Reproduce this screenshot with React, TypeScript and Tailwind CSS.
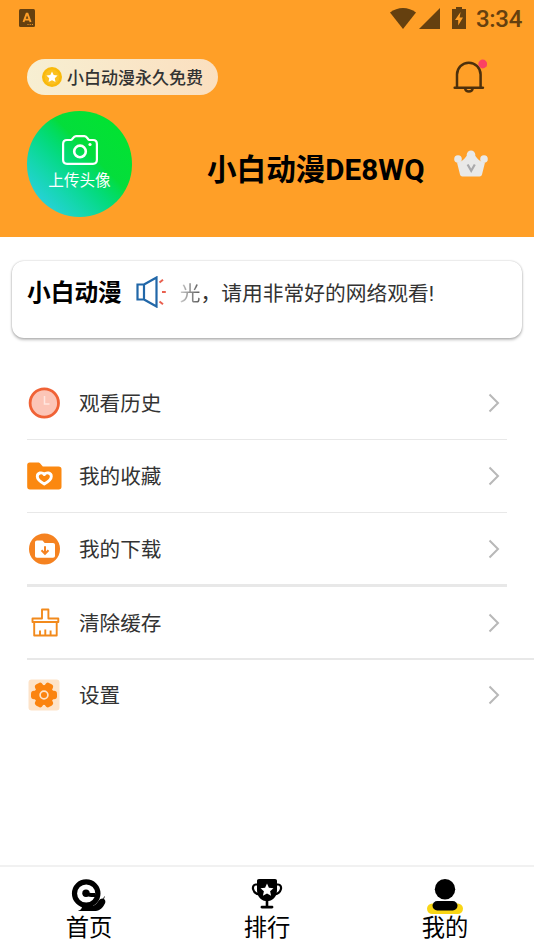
import type { ReactNode } from 'react';

type MenuItem = {
    label: string;
    icon: ReactNode;
    height: string;
    line: string;
};

function StatusBar() {
    return (
        <div className="flex h-9 items-center justify-between pr-3 pl-[19px] text-[#65400f]">
            <svg width="16" height="18" viewBox="0 0 16 18">
                <rect width="16" height="18" rx="1.5" fill="currentColor" />
                <path d="M4.5 13 7.6 4.8h.9L11.6 13M5.8 10.6h4.6" fill="none" stroke="#ff9f27" strokeWidth="1.9" />
                <path d="M8.5 15.5h1m1.2 0h1m1.2 0h1" stroke="#ff9f27" />
            </svg>
            <div className="flex items-center">
                <svg width="26" height="21" viewBox="0 0 26 21">
                    <path d="M0 4.5C7.5-1.5 18.5-1.5 26 4.5L13 21Z" fill="currentColor" />
                </svg>
                <svg className="ml-[3px]" width="21" height="21" viewBox="0 0 21 21">
                    <path d="M21 0v21H0Z" fill="currentColor" />
                </svg>
                <svg className="ml-3" width="14" height="22" viewBox="0 0 14 22">
                    <path d="M4 0h6v2h4v20H0V2h4Z" fill="currentColor" />
                    <path d="M8.6 5 3 13h3.2v5.5L11 10.5H7.6Z" fill="#ff9f27" />
                </svg>
                <span className="mt-px ml-[10px] text-[24px] leading-9 font-medium tracking-[-0.3px]">3:34</span>
            </div>
        </div>
    );
}

function BellIcon() {
    return (
        <svg width="36" height="38" viewBox="0 0 36 38" fill="none">
            <path d="M6 30V17.5a11.8 11.8 0 0 1 23.6 0V30" stroke="#4d300c" strokeWidth="2.5" />
            <path d="M3.7 30.7h28.2" stroke="#4d300c" strokeWidth="2.5" strokeLinecap="round" />
            <path d="M14 31.5c.8 4 7 4 7.8 0" stroke="#4d300c" strokeWidth="2.3" />
            <circle cx="31.700" cy="7" r="4.400" fill="#fb4163" />
        </svg>
    );
}

function CameraIcon() {
    return (
        <svg width="36" height="30" viewBox="0 0 36 30" fill="none" stroke="#fff" strokeWidth="2.2">
            <path
                d="M5 5h4c1.8 0 2-3.9 5-3.9h8.5c3 0 3 3.9 5 3.9H31c2.5 0 3.9 1.5 3.9 4v15.8c0 2.5-1.4 4-3.9 4H5c-2.5 0-3.9-1.5-3.9-4V9c0-2.5 1.4-4 3.9-4Z"
                strokeLinejoin="round"
            />
            <circle cx="18" cy="16.4" r="5.8" strokeWidth="2.6" />
            <circle cx="28" cy="9.5" r="1.6" fill="#fff" stroke="none" />
        </svg>
    );
}

function CrownIcon() {
    return (
        <svg width="34" height="28" viewBox="0 0 34 28">
            <g fill="#e9e9e8">
                <circle cx="4" cy="9" r="3.8" />
                <circle cx="17" cy="4.8" r="4.3" />
                <circle cx="30" cy="9" r="3.8" />
                <path d="M3 12.500c4-.8 7-2.200 10.200-7.500h7.600c3.200 5.300 6.200 6.700 10.200 7.500L28 24.500c-.3 1.300-1.200 2-2.500 2h-17c-1.300 0-2.200-.7-2.500-2Z" />
            </g>
            <path d="m13.600 14.500 3.600 6.300 3.600-6.300" fill="none" stroke="#a9a9ab" strokeWidth="2.2" />
        </svg>
    );
}

function SpeakerIcon() {
    return (
        <svg width="32" height="32" viewBox="0 0 32 32" fill="none">
            <path d="M1.5 8.500h6.500v15H1.500ZM8 8.500l12.500-7v29L8 23.500" stroke="#2167a8" strokeWidth="2.200" />
            <path d="m23.500 6.500 3.500-2.700M26 16h3.800M23.500 25.500l3.500 2.700" stroke="#e9604f" strokeWidth="2" />
        </svg>
    );
}

function ClockIcon() {
    return (
        <svg width="36" height="36" viewBox="0 0 36 36" fill="none">
            <circle cx="18.3" cy="18" r="14.2" fill="#fcc5b7" stroke="#f06236" strokeWidth="2.8" />
            <path d="M18.5 11v8h5" stroke="#ffe6df" strokeWidth="1.5" />
        </svg>
    );
}

function FavoriteIcon() {
    return (
        <svg width="36" height="36" viewBox="0 0 36 36" fill="none">
            <path d="M1.2 7c0-1.600.8-2.500 2.500-2.500h8.300c1 0 1.500.3 2.200 1l2.600 3H32.500c2 0 3 .9 3 2.700v17.500c0 1.800-1 2.800-2.800 2.800H4c-1.800 0-2.800-1-2.800-2.800Z" fill="#fb8810" />
            <path d="M18.300 26c-4-2.300-7-4.800-7-7.500 0-3.800 4.800-4.800 7-2 2.200-2.800 7-1.800 7 2 0 2.700-3 5.200-7 7.500Z" stroke="#fff" strokeWidth="2.900" strokeLinejoin="round" />
        </svg>
    );
}

function DownloadIcon() {
    return (
        <svg width="36" height="36" viewBox="0 0 36 36" fill="none">
            <circle cx="18.5" cy="18" r="15.5" fill="#f58220" />
            <path d="M9 11.500c0-1.300.8-2 2-2h5.500l2.200 2.500H27c1.300 0 2 .7 2 2v10.800c0 1.300-.7 2-2 2H11c-1.300 0-2-.7-2-2Z" fill="#fff" />
            <path d="M19 15.300v7m-3.500-3 3.500 3.500 3.500-3.500" stroke="#f58220" strokeWidth="2" />
        </svg>
    );
}

function BroomIcon() {
    return (
        <svg width="36" height="36" viewBox="0 0 36 36" fill="none" stroke="#f28a1c" strokeWidth="1.9" strokeLinejoin="round">
            <path d="M16 13.500V4.500h6.400v9h9.900v3.500H6.500v-3.500ZM8.200 17v13.500h22.500V17M14 30.500v-5m5.300 5v-6m5.300 6v-5" />
        </svg>
    );
}

function SettingsIcon() {
    return (
        <svg width="36" height="36" viewBox="0 0 36 36">
            <rect x="2.5" y="2.5" width="31" height="31" rx="3" fill="#fde3c9" />
            <g fill="#fb830f">
                <circle cx="18" cy="18" r="10" />
                <rect x="5" y="13.8" width="26" height="8.4" rx="3" />
                <rect x="5" y="13.8" width="26" height="8.4" rx="3" transform="rotate(60 18 18)" />
                <rect x="5" y="13.8" width="26" height="8.4" rx="3" transform="rotate(120 18 18)" />
            </g>
            <circle cx="18" cy="18" r="3.9" fill="none" stroke="#fde3c9" strokeWidth="1.7" />
        </svg>
    );
}

function SnailIcon() {
    return (
        <svg width="36" height="36" viewBox="0 0 36 36">
            <circle cx="15.200" cy="16.500" r="11.700" fill="none" stroke="#000" strokeWidth="5.200" />
            <circle cx="15" cy="16.300" r="3.700" />
            <path d="M16 14.500c2 1.700 4 1.500 8.500 1.500v4c-3.500.3-6.500 0-9.500-1.500Z" />
            <path d="M7.5 33.500c2.500-.6 3.500-2 3.500-4.500h11c4-1.500 4.500-5 7.500-7 2-1.200 4.500-.2 4.800 2 .3 2-.5 2.800-1.500 4.500-2 3.500-5 5.500-9.800 5.500H8.500c-1.500 0-1.500-.3-1-.5Z" />
            <path d="m32 23 1.500-3.500" stroke="#000" strokeWidth=".8" />
        </svg>
    );
}

function TrophyIcon() {
    return (
        <svg width="32" height="34" viewBox="0 0 32 34">
            <path d="M8 7.500H5c-5 0-4 9.500 4 10M24 7.500h3c5 0 4 9.500-4 10" fill="none" stroke="#000" strokeWidth="2.2" />
            <path d="M8 2h16c1.300 0 2 .7 2 2v9c0 6.500-4 10.500-8.700 11v4.800H21c1.800 0 2 2.600 0 2.600H11c-2 0-1.800-2.600 0-2.600h3.700V24C10 23.500 6 19.500 6 13V4c0-1.300.7-2 2-2Z" />
            <path d="m16 6.500 1.900 4.200 4.600.5-3.400 3.100 1 4.500-4.100-2.300-4.100 2.300 1-4.500-3.400-3.100 4.600-.5Z" fill="#fff" />
        </svg>
    );
}

function ProfileIcon() {
    return (
        <svg width="36" height="38" viewBox="0 0 36 38">
            <rect x="0" y="26.500" width="36" height="10.500" rx="5.250" fill="#f9d616" />
            <circle cx="18" cy="12.200" r="10.200" />
            <rect x="5.500" y="24" width="25" height="9.500" rx="4.750" />
        </svg>
    );
}

const menu: MenuItem[] = [
    { label: '观看历史', icon: <ClockIcon />, height: 'h-[72px]', line: 'h-px mr-[27px]' },
    { label: '我的收藏', icon: <FavoriteIcon />, height: 'h-[72px]', line: 'h-px mr-[27px]' },
    { label: '我的下载', icon: <DownloadIcon />, height: 'h-[71px]', line: 'h-[3px] mr-[27px]' },
    { label: '清除缓存', icon: <BroomIcon />, height: 'h-[71px]', line: 'h-[2px]' },
    { label: '设置', icon: <SettingsIcon />, height: 'h-[70px]', line: '' },
];

const tabs = [
    { label: '首页', icon: <SnailIcon /> },
    { label: '排行', icon: <TrophyIcon /> },
    { label: '我的', icon: <ProfileIcon /> },
];

function MenuRow({ label, icon, height, line }: MenuItem) {
    return (
        <>
            <div className={`flex items-center pr-[34px] pl-[26px] ${height}`}>
                {icon}
                <span className="mt-[2px] ml-[17px] flex-1 text-[20.6px] leading-8 text-[#333]">{label}</span>
                <svg width="12" height="20" viewBox="0 0 12 20" fill="none">
                    <path d="m1.500 1.500 8.500 8.500-8.500 8.500" stroke="#b8b8b8" strokeWidth="2" />
                </svg>
            </div>
            {line && <div className={`ml-[27px] bg-[#e8e8e8] ${line}`} />}
        </>
    );
}

export default function App() {
    return (
        <div className="flex h-[950px] w-[534px] flex-col overflow-hidden bg-white font-[Roboto,'Noto_Sans_CJK_SC',sans-serif]">
            <header className="h-[237px] shrink-0 bg-[#ff9f27]">
                <StatusBar />
                <div className="flex items-center justify-between pt-[20px] pr-[47px] pl-[27px]">
                    <div className="mt-[3px] flex h-9 w-[191px] items-center rounded-full bg-linear-to-r from-[#f7efd2] to-[#fbdfbf] pl-[14px]">
                        <svg width="22" height="22" viewBox="0 0 22 22">
                            <circle cx="11" cy="11" r="10" fill="#f9b90b" />
                            <circle cx="11" cy="11" r="7.5" fill="#fbc020" />
                            <path d="m11 5.500 1.700 3.500 3.900.5-2.800 2.700.7 3.800-3.500-1.800L7.500 16l.7-3.800-2.800-2.700 3.900-.5Z" fill="#fff" />
                        </svg>
                        <span className="mt-px ml-[4px] text-[17px] leading-6 font-medium whitespace-nowrap text-[#333]">
                            小白动漫永久免费
                        </span>
                    </div>
                    <BellIcon />
                </div>
                <div className="mt-[16px] flex h-[106px] items-center pl-[27px]">
                    <div className="flex h-[106px] w-[105px] flex-col items-center rounded-full bg-linear-to-tr from-[#2ad0e0] from-10% via-[#04dd3b] via-60% to-[#00e62b] pt-6 text-white">
                        <CameraIcon />
                        <span className="mt-[4px] text-[15.6px] leading-6">上传头像</span>
                    </div>
                    <h1 className="mt-[12px] ml-[75px] w-[247px] text-[29.6px] leading-10 font-bold whitespace-nowrap text-black">
                        小白动漫DE8WQ
                    </h1>
                    <CrownIcon />
                </div>
            </header>

            <section className="mx-3 mt-6 flex h-[77px] shrink-0 items-start rounded-xl bg-white pt-[15px] pl-[15px] shadow-[0_0_2px_rgba(0,0,0,0.25),0_2px_3px_rgba(0,0,0,0.25)]">
                <span className="mt-px text-[23.7px] leading-8 font-bold text-black">小白动漫</span>
                <div className="ml-[14px]">
                    <SpeakerIcon />
                </div>
                <p className="mt-[2px] ml-[12px] text-[20.75px] leading-8 whitespace-nowrap text-[#333]">
                    <span className="bg-linear-to-r from-[#ccc] to-[#555] bg-clip-text text-transparent">光</span>
                    ，请用非常好的网络观看!
                </p>
            </section>

            <main className="mt-[29px] flex-1">
                {menu.map((item) => (
                    <MenuRow key={item.label} {...item} />
                ))}
            </main>

            <nav className="grid h-[85px] shrink-0 grid-cols-3 border-t-2 border-[#f1f1f1]">
                {tabs.map((tab) => (
                    <div key={tab.label} className="flex flex-col items-center pt-[10px]">
                        <div className="h-[35px]">{tab.icon}</div>
                        <span className="text-[23.3px] leading-8 text-black">{tab.label}</span>
                    </div>
                ))}
            </nav>
        </div>
    );
}
